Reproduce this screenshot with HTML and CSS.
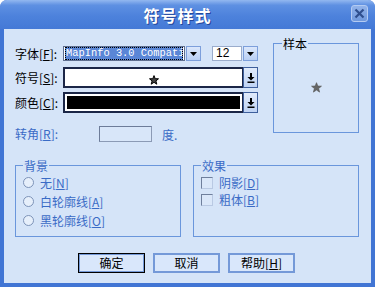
FILE: index.html
```html
<!DOCTYPE html>
<html>
<head>
<meta charset="utf-8">
<link rel="stylesheet" href="styles.css">
<title>符号样式</title>
</head>
<body>
<div class="window">
  <div class="titlebar">
    <span class="title">符号样式</span>
    <span class="close"><svg width="11" height="11" viewBox="0 0 11 11"><path d="M1.5 1.5 L9.5 9.5 M9.5 1.5 L1.5 9.5" stroke="#2f4f8e" stroke-width="2.2"/></svg></span>
  </div>
  <div class="client">
    <div class="top">
      <div class="fields">
        <div class="row row-font">
          <span class="lbl">字体[<u>F</u>]:</span>
          <div class="combo combo-font">
            <span class="combo-text"><span class="sel">MapInfo 3.0 Compati</span></span>
            <span class="dd"><svg width="7" height="4" viewBox="0 0 7 4"><path d="M0 0 H7 L3.5 4 Z" fill="#000"/></svg></span>
          </div>
          <div class="combo combo-size">
            <span class="combo-text size-text">12</span>
            <span class="dd"><svg width="7" height="4" viewBox="0 0 7 4"><path d="M0 0 H7 L3.5 4 Z" fill="#000"/></svg></span>
          </div>
        </div>
        <div class="row row-box">
          <span class="lbl">符号[<u>S</u>]:</span>
          <div class="box">
            <span class="box-field star-field"><svg width="10" height="10" viewBox="0 0 10 10"><path d="M5 0.6 L6.2 3.7 L9.5 3.8 L6.9 5.9 L7.8 9.2 L5 7.3 L2.2 9.2 L3.1 5.9 L0.5 3.8 L3.8 3.7 Z" fill="#444" stroke="#000" stroke-width="1"/></svg></span>
            <span class="box-btn"><svg width="8" height="10" viewBox="0 0 8 10"><path d="M3 0 H5 V4 H7.5 L4 7.5 L0.5 4 H3 Z" fill="#000"/><rect x="0.5" y="8.5" width="7" height="1.5" fill="#000"/></svg></span>
          </div>
        </div>
        <div class="row row-box row-color">
          <span class="lbl">颜色[<u>C</u>]:</span>
          <div class="box">
            <span class="box-field color-field"><span class="swatch"></span></span>
            <span class="box-btn"><svg width="8" height="10" viewBox="0 0 8 10"><path d="M3 0 H5 V4 H7.5 L4 7.5 L0.5 4 H3 Z" fill="#000"/><rect x="0.5" y="8.5" width="7" height="1.5" fill="#000"/></svg></span>
          </div>
        </div>
        <div class="row row-angle">
          <span class="lbl lbl-angle">转角[<u>R</u>]:</span>
          <span class="angle-input"></span>
          <span class="unit">度.</span>
        </div>
      </div>
      <div class="group sample">
        <span class="group-title sample-title">样本</span>
        <div class="sample-view"><svg width="11" height="11" viewBox="0 0 10 10"><path d="M5 0.6 L6.2 3.7 L9.5 3.8 L6.9 5.9 L7.8 9.2 L5 7.3 L2.2 9.2 L3.1 5.9 L0.5 3.8 L3.8 3.7 Z" fill="#666" stroke="#555" stroke-width="0.6"/></svg></div>
      </div>
    </div>
    <div class="groups">
      <div class="group">
        <span class="group-title">背景</span>
        <div class="radio"><span class="dot"></span>无[<u>N</u>]</div>
        <div class="radio"><span class="dot"></span>白轮廓线[<u>A</u>]</div>
        <div class="radio"><span class="dot"></span>黑轮廓线[<u>O</u>]</div>
      </div>
      <div class="group">
        <span class="group-title">效果</span>
        <div class="check"><span class="tick"></span>阴影[<u>D</u>]</div>
        <div class="check"><span class="tick"></span>粗体[<u>B</u>]</div>
      </div>
    </div>
    <div class="buttons">
      <span class="btn btn-default">确定</span>
      <span class="btn">取消</span>
      <span class="btn">帮助[<u>H</u>]</span>
    </div>
  </div>
</div>
</body>
</html>
```

FILE: styles.css
```css
body {
  margin: 0;
  background: #fff;
  font-family: "Noto Sans CJK SC", "Liberation Sans", sans-serif;
  font-size: 12px;
  color: #000;
}
.window {
  width: 375px;
  height: 287px;
  display: flex;
  flex-direction: column;
  background: #4175d4;
  border-radius: 7px 7px 0 0;
  overflow: hidden;
}
.titlebar {
  height: 29px;
  flex: none;
  display: flex;
  align-items: center;
  background: linear-gradient(#93b8f0, #5e90e2 18%, #4d82dc 55%, #4479d6);
}
.title {
  flex: 1;
  text-align: center;
  padding-left: 4px;
  color: #fff;
  font-size: 16px;
  font-weight: bold;
  letter-spacing: 1px;
  text-shadow: 1px 1px 0 #24479a;
}
.close {
  width: 15px;
  height: 15px;
  margin: 0 7px 2px 0;
  display: flex;
  align-items: center;
  justify-content: center;
  background: linear-gradient(#92b3ea, #6f98dc);
  border: 1px solid #b4cbf2;
  border-radius: 3px;
}
.client {
  flex: 1;
  margin: 0 4px 4px;
  padding: 13px 0 0 11px;
  background: #d5e4f8;
}
.top {
  display: flex;
}
.fields {
  width: 243px;
}
.row {
  display: flex;
  align-items: center;
}
.lbl {
  width: 48px;
  flex: none;
  line-height: 14px;
}
.row-font {
  height: 15px;
  margin-top: 4px;
}
.combo {
  display: flex;
  height: 15px;
}
.combo-font {
  width: 138px;
}
.combo-size {
  width: 46px;
  margin-left: 11px;
}
.combo-text {
  flex: 1;
  display: flex;
  align-items: center;
  margin-right: 1px;
  padding: 0 1px;
  background: #fff;
  border: 1px solid #5f6f90;
  overflow: hidden;
  white-space: nowrap;
}
.sel {
  flex: 1;
  align-self: stretch;
  line-height: 13px;
  padding-left: 1px;
  background: #5a86d6;
  color: #fff;
  outline: 1px dotted #000;
  outline-offset: -1px;
  font-family: "Liberation Mono", monospace;
  font-size: 10.4px;
  overflow: hidden;
}
.size-text {
  padding-left: 3px;
  font-family: "Liberation Sans", sans-serif;
  font-size: 12px;
  line-height: 13px;
  border-color: #9aaccc;
}
.dd {
  width: 13px;
  flex: none;
  display: flex;
  align-items: center;
  justify-content: center;
  background: linear-gradient(#dbe7fb, #b9cff3);
  border: 1px solid #7d9fdb;
}
.row-box {
  height: 21px;
  margin-top: 6px;
}
.row-color {
  margin-top: 4px;
}
.box {
  width: 195px;
  height: 21px;
  display: flex;
}
.box-field {
  flex: 1;
  display: flex;
  align-items: center;
  justify-content: center;
  background: #fff;
  border: 2px solid #1b2647;
  border-right-width: 1px;
}
.star-field {
  padding-top: 5px;
}
.color-field {
  padding: 2px;
}
.swatch {
  flex: 1;
  align-self: stretch;
  background: #000;
}
.box-btn {
  width: 13px;
  flex: none;
  display: flex;
  align-items: center;
  justify-content: center;
  background: linear-gradient(#e1ebfb, #bfd3f4);
  border: 1px solid #3e5f9c;
}
.row-angle {
  height: 16px;
  margin-top: 13px;
  color: #3a6bc6;
}
.lbl-angle {
  width: 84px;
}
.angle-input {
  width: 51px;
  height: 14px;
  border: 1px solid #8b9ab5;
  border-top-color: #6d7c99;
  border-left-color: #6d7c99;
  background: #d8e6f9;
}
.unit {
  margin-left: 10px;
}
.group {
  border: 1px solid #6a96dc;
}
.group-title {
  display: block;
  width: fit-content;
  height: 13px;
  line-height: 13px;
  margin: -7px 0 0 7px;
  padding: 0 1px;
  background: #d5e4f8;
  color: #3a6bc6;
}
.sample {
  width: 84px;
  height: 88px;
  margin: 1px 0 0 15px;
  display: flex;
  flex-direction: column;
}
.sample-title {
  margin-left: 8px;
  color: #000;
}
.sample-view {
  flex: 1;
  display: flex;
  align-items: center;
  justify-content: center;
  padding: 0 0 7px 0;
}
.groups {
  display: flex;
  gap: 12px;
  margin-top: 23px;
}
.groups .group {
  width: 164px;
  height: 70px;
}
.radio, .check {
  display: flex;
  align-items: center;
  color: #3a6bc6;
  line-height: 14px;
}
.radio {
  height: 19px;
  padding-left: 7px;
}
.radio:first-of-type {
  margin-top: 1px;
}
.dot {
  width: 9px;
  height: 9px;
  margin-right: 6px;
  border: 1px solid #7d93b8;
  border-radius: 50%;
  background: #e6effb;
}
.check {
  height: 17px;
  padding-left: 7px;
}
.check:first-of-type {
  margin-top: 2px;
}
.tick {
  width: 10px;
  height: 10px;
  margin-right: 6px;
  border: 1px solid #b9c9e3;
  border-top-color: #6f7f9c;
  border-left-color: #6f7f9c;
  background: #dae7f9;
}
.buttons {
  display: flex;
  gap: 8px;
  margin-top: 16px;
  padding-left: 63px;
}
.btn {
  width: 63px;
  height: 16px;
  display: flex;
  align-items: center;
  justify-content: center;
  border: 2px solid #7499d8;
  background: #d9e7fb;
  line-height: 14px;
}
.btn-default {
  border: 1px solid #000;
  box-shadow: inset 0 0 0 1px #7499d8;
  width: 65px;
  height: 18px;
}
```
